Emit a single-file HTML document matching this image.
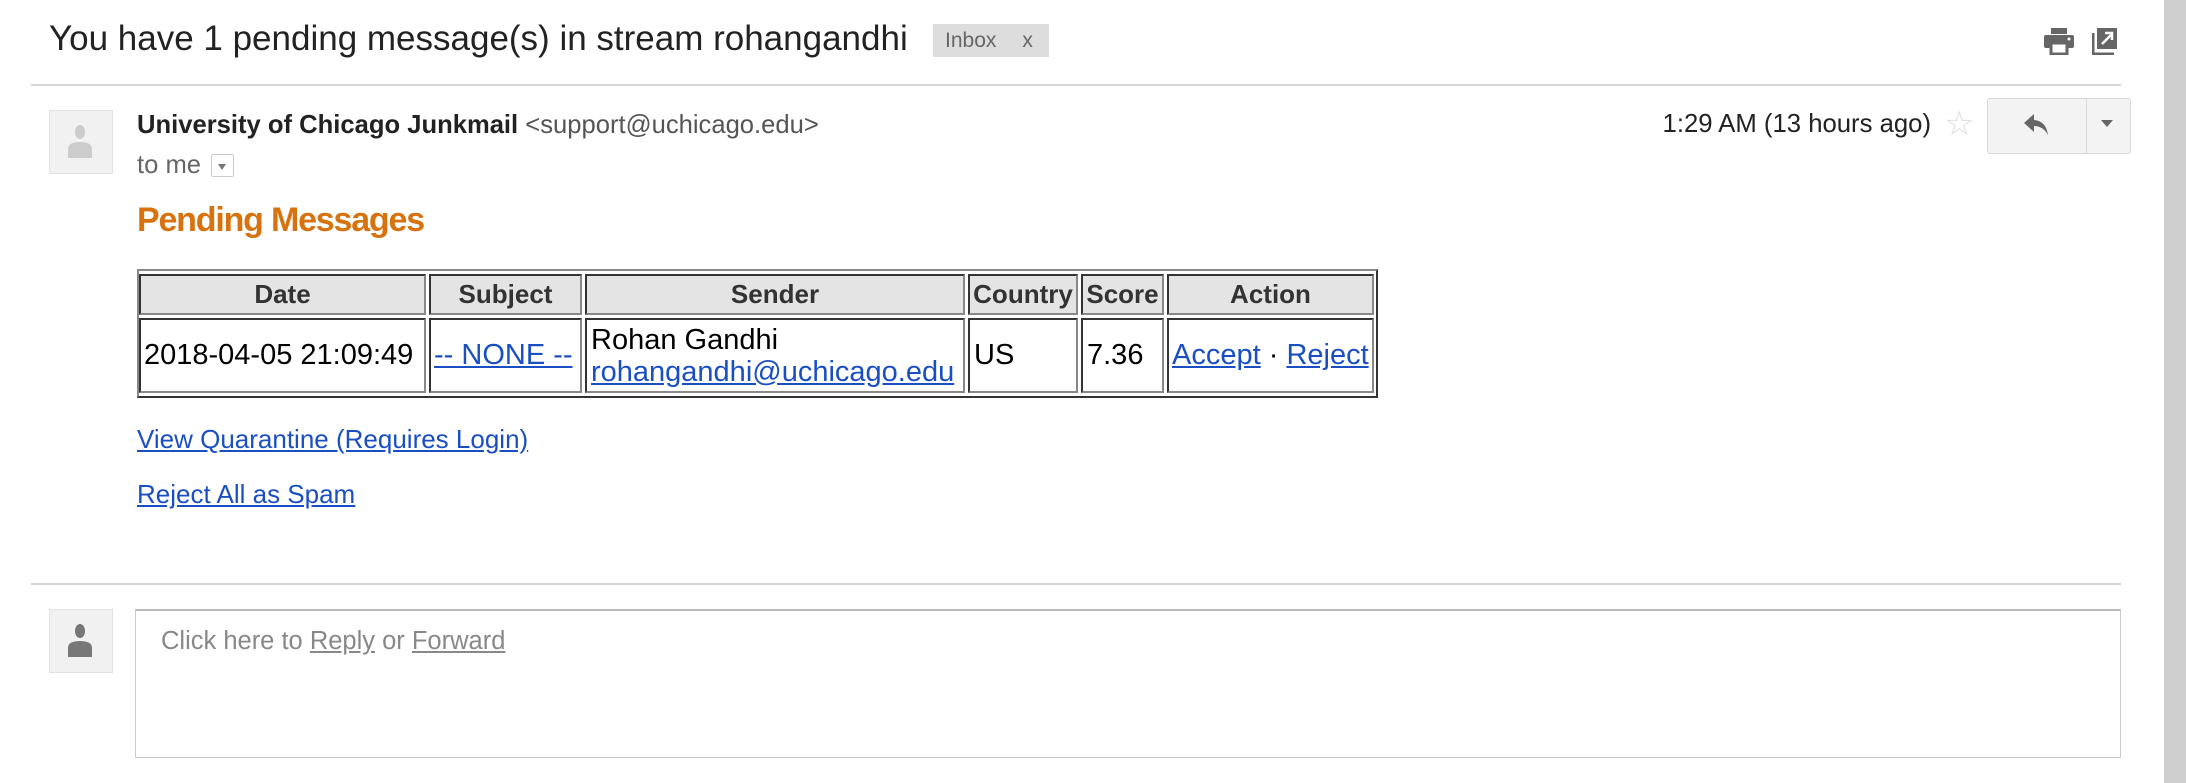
<!DOCTYPE html>
<html><head><meta charset="utf-8"><style>
*{margin:0;padding:0;box-sizing:border-box}
body{width:2186px;height:783px;background:#fff;font-family:"Liberation Sans",Arial,sans-serif;position:relative;overflow:hidden;color:#222}
.a{position:absolute}
.sb{left:2164px;top:0;width:22px;height:783px;background:#cfcfcf}
.hr{height:2px;background:#d6d6d6}
.av{background:#f1f1f1;border:1px solid #e2e2e2}
a{color:#1a4fc4;text-decoration:underline}
.t{left:137px;top:269px;width:1241px;height:129px;border:2px solid;border-color:#888 #333 #333 #888}
.c{position:absolute;border:2px solid;border-color:#333 #888 #888 #333;font-size:29px;color:#000;display:flex;align-items:center;white-space:nowrap;overflow:hidden}
.h{background:#e4e4e4;font-weight:bold;color:#333;justify-content:center;top:3px;height:41px;font-size:26px}
.d{top:47px;height:75px;padding-left:4px}
</style></head><body>
<div class="a sb"></div>
<div class="a" style="left:49px;top:19px;font-size:35px;color:#222">You have 1 pending message(s) in stream rohangandhi</div>
<div class="a" style="left:933px;top:24px;width:116px;height:33px;background:#ddd;color:#666;font-size:21px;line-height:33px;padding-left:12px">Inbox<span style="margin-left:26px">x</span></div>
<svg class="a" style="left:2043px;top:27px" width="32" height="28" viewBox="0 0 32 28"><rect x="8" y="1" width="16" height="6" fill="#666"/><rect x="1" y="8" width="30" height="13" rx="2" fill="#666"/><rect x="8" y="16" width="16" height="11" fill="#fff" stroke="#666" stroke-width="3"/><circle cx="26" cy="12" r="1.5" fill="#fff"/></svg>
<svg class="a" style="left:2092px;top:27px" width="26" height="28" viewBox="0 0 26 28"><path d="M1 6V27H22" fill="none" stroke="#666" stroke-width="3"/><rect x="5" y="1" width="20" height="21" fill="#666"/><path d="M10 17L20 7M13 6H20V13" fill="none" stroke="#fff" stroke-width="2.5"/></svg>
<div class="a hr" style="left:31px;top:84px;width:2090px"></div>
<div class="a av" style="left:49px;top:110px;width:64px;height:64px"></div>
<svg class="a" style="left:67px;top:124px" width="26" height="34" viewBox="0 0 26 34"><ellipse cx="13" cy="8" rx="5" ry="7" fill="#ccc"/><path d="M1 34V25Q1 18 13 18Q25 18 25 25V34Z" fill="#ccc"/></svg>
<div class="a" style="left:137px;top:111px;font-size:25.6px"><b style="color:#222">University of Chicago Junkmail</b> <span style="color:#555">&lt;support@uchicago.edu&gt;</span></div>
<div class="a" style="left:137px;top:151px;font-size:25.6px;color:#666">to me</div>
<div class="a" style="left:211px;top:154px;width:23px;height:23px;border:1px solid #ccc;border-radius:2px"></div>
<div class="a" style="left:218px;top:164px;width:0;height:0;border:4px solid transparent;border-top:6px solid #777"></div>
<div class="a" style="left:1631px;width:300px;text-align:right;top:110px;font-size:25.7px;color:#222">1:29 AM (13 hours ago)</div>
<div class="a" style="left:1944px;top:104px;font-size:34px;color:#ddd">☆</div>
<div class="a" style="left:1987px;top:98px;width:144px;height:56px;background:#f3f3f3;border:1px solid #d8d8d8;border-radius:3px"></div>
<div class="a" style="left:2086px;top:99px;width:1px;height:54px;background:#d8d8d8"></div>
<svg class="a" style="left:2023px;top:112px" width="26" height="26" viewBox="0 0 26 26"><path d="M11 2L1 11L11 20V14Q20 14 25 23Q23 9 11 8Z" fill="#666"/></svg>
<div class="a" style="left:2101px;top:120px;border:6px solid transparent;border-top:7px solid #666"></div>
<div class="a" style="left:137px;top:201px;font-size:34px;font-weight:bold;color:#d6730e;letter-spacing:-1.2px">Pending Messages</div>
<div class="a t">
<div class="c h" style="left:0;width:287px">Date</div>
<div class="c h" style="left:290px;width:153px">Subject</div>
<div class="c h" style="left:446px;width:380px">Sender</div>
<div class="c h" style="left:829px;width:110px">Country</div>
<div class="c h" style="left:942px;width:83px">Score</div>
<div class="c h" style="left:1028px;width:207px">Action</div>
<div class="c d" style="left:0;width:287px;padding-left:3px">2018-04-05 21:09:49</div>
<div class="c d" style="left:290px;width:153px;padding-left:3px"><a>-- NONE --</a></div>
<div class="c d" style="left:446px;width:380px;flex-direction:column;align-items:flex-start;justify-content:center;line-height:32px">Rohan Gandhi<a>rohangandhi@uchicago.edu</a></div>
<div class="c d" style="left:829px;width:110px">US</div>
<div class="c d" style="left:942px;width:83px">7.36</div>
<div class="c d" style="left:1028px;width:207px;padding-left:3px"><a>Accept</a>&nbsp;·&nbsp;<a>Reject</a></div>
</div>
<div class="a" style="left:137px;top:424px;font-size:26px"><a>View Quarantine (Requires Login)</a></div>
<div class="a" style="left:137px;top:479px;font-size:26px"><a>Reject All as Spam</a></div>
<div class="a hr" style="left:31px;top:583px;width:2090px"></div>
<div class="a av" style="left:49px;top:609px;width:64px;height:64px"></div>
<svg class="a" style="left:67px;top:623px" width="26" height="34" viewBox="0 0 26 34"><ellipse cx="13" cy="8" rx="5" ry="7" fill="#777"/><path d="M1 34V25Q1 18 13 18Q25 18 25 25V34Z" fill="#777"/></svg>
<div class="a" style="left:135px;top:609px;width:1986px;height:149px;border:1px solid #ccc;border-top:2px solid #bbb"></div>
<div class="a" style="left:161px;top:627px;font-size:25.5px;color:#888">Click here to <u>Reply</u> or <u>Forward</u></div>
</body></html>
